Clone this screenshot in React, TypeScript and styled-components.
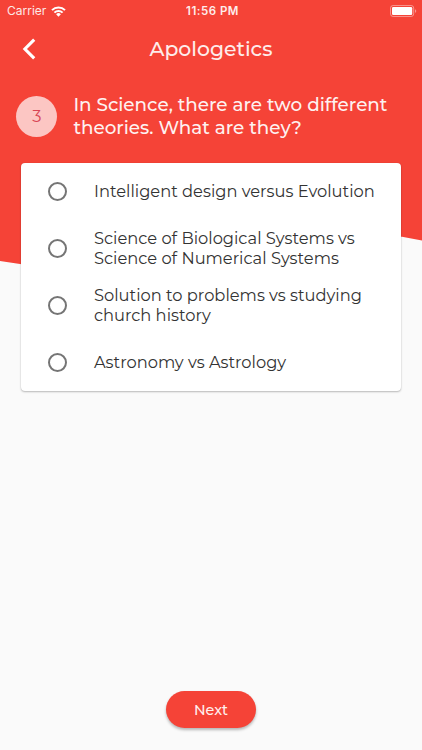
import React from "react";
import styled, { createGlobalStyle } from "styled-components";

const GlobalStyle = createGlobalStyle`
  * { box-sizing: border-box; }
  body { margin: 0; background: #fafafa; }
`;

const RED = "#f54337";

const Screen = styled.div`
  position: relative;
  isolation: isolate;
  display: flex;
  flex-direction: column;
  width: 422px;
  height: 750px;
  overflow: hidden;
  background: #fafafa;
  font-family: Montserrat, Inter, sans-serif;
`;

const Backdrop = styled.div`
  position: absolute;
  z-index: -1;
  inset: 0 0 auto;
  height: 290px;
  background: ${RED};
  clip-path: polygon(0 0, 100% 0, 100% 240.5px, 402px 236.8px, 320px 236px, 110px 280px, 20px 264px, 0 261px);
`;

const StatusBar = styled.div`
  display: grid;
  grid-template-columns: 1fr auto 1fr;
  align-items: center;
  height: 21px;
  padding: 0 5px 0 7px;
  color: #fff;
  font-family: Inter, sans-serif;
`;

const CarrierGroup = styled.div`
  display: flex;
  align-items: center;
  gap: 5px;
`;

const Carrier = styled.span`
  font-size: 12px;
  line-height: 22px;
  opacity: 0.88;
`;

const Clock = styled.span`
  font-size: 11.5px;
  font-weight: 600;
  line-height: 22px;
  letter-spacing: 0.5px;
  padding-left: 1px;
  opacity: 0.9;
`;

const BatteryIcon = styled.svg`
  justify-self: end;
  display: block;
`;

const AppBar = styled.header`
  display: grid;
  grid-template-columns: 58px 1fr 58px;
  align-items: center;
  height: 56px;
  color: #fff;
`;

const BackButton = styled.button`
  display: flex;
  padding: 0 0 0 22px;
  border: 0;
  background: none;
  color: inherit;
`;

const Line = styled.span`
  display: block;
  white-space: nowrap;
`;

const Title = styled.h1`
  margin: 0;
  text-align: center;
  font-size: 20.4px;
  font-weight: 500;
  line-height: 24px;
  opacity: 0.9;
`;

const Question = styled.section`
  display: flex;
  align-items: center;
  gap: 16px;
  height: 86px;
  padding: 0 16px 7px 16.4px;
`;

const NumberBadge = styled.div`
  display: grid;
  place-items: center;
  flex: none;
  width: 41px;
  height: 41px;
  padding-bottom: 2px;
  border-radius: 50%;
  background: #fcc6c3;
  color: #d84453;
  font-size: 16.3px;
`;

const Prompt = styled.h2`
  margin: 0;
  color: #fff;
  font-size: 18.35px;
  font-weight: 500;
  line-height: 22.5px;
  opacity: 0.93;
`;

const Card = styled.div`
  margin: 0 21px;
  height: 228px;
  border-radius: 4px;
  background: #fff;
  box-shadow: 0 1px 2px rgba(0, 0, 0, 0.26), 0 0 1px rgba(0, 0, 0, 0.12);
`;

const Option = styled.label`
  display: flex;
  align-items: center;
  gap: 27px;
  height: 57px;
  padding-left: 27px;
`;

const Radio = styled.span`
  flex: none;
  width: 19px;
  height: 19px;
  border: 2px solid #757575;
  border-radius: 50%;
`;

const OptionText = styled.span`
  padding-bottom: 2px;
  color: #333;
  font-size: 16.3px;
  line-height: 20px;
`;

const Footer = styled.footer`
  display: flex;
  justify-content: center;
  margin-top: auto;
  padding-bottom: 22.5px;
`;

const NextButton = styled.button`
  width: 90px;
  height: 37px;
  padding: 1px 0 0;
  border: 0;
  border-radius: 19px;
  background: ${RED};
  color: #fff0ee;
  box-shadow: 0 2px 3px rgba(0, 0, 0, 0.28);
  font: 500 14.3px/20px Montserrat, Inter, sans-serif;
`;

const promptLines = ["In Science, there are two different", "theories. What are they?"];

const options = [
  ["Intelligent design versus Evolution"],
  ["Science of Biological Systems vs", "Science of Numerical Systems"],
  ["Solution to problems vs studying", "church history"],
  ["Astronomy vs Astrology"],
];

const renderLines = (lines: string[]) => lines.map((text) => <Line key={text}>{text}</Line>);

export default function App() {
  return (
    <>
      <GlobalStyle />
      <Screen>
        <Backdrop />
        <StatusBar>
          <CarrierGroup>
            <Carrier>Carrier</Carrier>
            <svg width="15" height="11" viewBox="0 0 15 11" fill="none" stroke="#fff" strokeWidth="2">
              <path d="M1 4.1a9.2 9.2 0 0 1 13 0" />
              <path d="M3.4 6.6a5.8 5.8 0 0 1 8.2 0" />
              <path d="M5.1 8.3a3.4 3.4 0 0 1 4.8 0L7.5 10.7Z" fill="#fff" stroke="none" />
            </svg>
          </CarrierGroup>
          <Clock>11:56 PM</Clock>
          <BatteryIcon width="27" height="12" viewBox="0 0 27 12">
            <rect x="0.5" y="0.5" width="23.2" height="11" rx="2.6" fill="none" stroke="#fff" strokeOpacity="0.42" />
            <rect x="2" y="2" width="20.2" height="8" rx="1.2" fill="#fff" />
            <path d="M25 4.2c1.7.5 1.7 3.1 0 3.6Z" fill="#fff" fillOpacity="0.45" />
          </BatteryIcon>
        </StatusBar>
        <AppBar>
          <BackButton aria-label="Back">
            <svg width="14" height="22" viewBox="0 0 14 22" fill="none" stroke="#fff" strokeWidth="3.1">
              <path d="M12.2 1.7 2.9 11l9.3 9.3" />
            </svg>
          </BackButton>
          <Title>Apologetics</Title>
        </AppBar>
        <Question>
          <NumberBadge>3</NumberBadge>
          <Prompt>{renderLines(promptLines)}</Prompt>
        </Question>
        <Card>
          {options.map((lines) => (
            <Option key={lines[0]}>
              <Radio />
              <OptionText>{renderLines(lines)}</OptionText>
            </Option>
          ))}
        </Card>
        <Footer>
          <NextButton>Next</NextButton>
        </Footer>
      </Screen>
    </>
  );
}
